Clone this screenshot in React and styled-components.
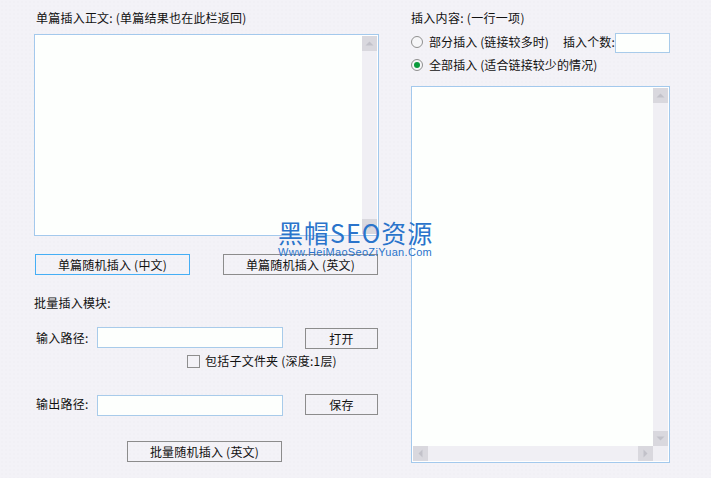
import React from "react";
import styled, { createGlobalStyle } from "styled-components";

const GlobalStyle = createGlobalStyle`
  html, body {
    margin: 0;
    padding: 0;
    background: #f3f2f7;
  }
  * {
    box-sizing: border-box;
  }
`;

const Page = styled.div`
  position: relative;
  display: grid;
  grid-template-columns: 345px 259px;
  column-gap: 32px;
  width: 711px;
  height: 478px;
  padding: 0 0 0 34px;
  overflow: hidden;
  color: #111;
  font-family: "Noto Sans CJK SC", "Liberation Sans", sans-serif;
  font-size: 12px;
  line-height: 16px;
  background-color: #f3f2f7;
  background-image: radial-gradient(#f1f0f5 1px, transparent 1px);
  background-size: 4px 4px;
`;

const Column = styled.div`
  display: flex;
  flex-direction: column;
`;

const Text = styled.span`
  white-space: nowrap;
  letter-spacing: ${(p) => p.$spacing ?? 0.22}px;
`;

const Heading = styled(Text)`
  display: block;
  margin: ${(p) => p.$margin || "10px 0 8px 2px"};
`;

const ScrollBox = styled.div`
  display: grid;
  grid-template-columns: 1fr 15px;
  grid-template-rows: ${(p) => (p.$horizontal ? "1fr 15px" : "1fr")};
  height: ${(p) => p.$height}px;
  margin-top: ${(p) => p.$top || 0}px;
  border: 1px solid #a3c9ec;
  padding: 1px;
  background: #fff;
`;

const Editor = styled.div`
  background: #fdfffd;
`;

const VTrack = styled.div`
  display: flex;
  flex-direction: column;
  justify-content: space-between;
  background: #f0eff4;
`;

const HTrack = styled.div`
  display: flex;
  justify-content: space-between;
  background: #f0eff4;
`;

const Corner = styled.div`
  background: #f0eff4;
`;

const Arrow = styled.div`
  display: flex;
  align-items: center;
  justify-content: center;
  width: 15px;
  height: 15px;
  background: #d9d8de;
  color: #c2c1c9;
`;

const Tri = ({ d }) => (
  <Arrow>
    <svg width="9" height="9" viewBox="0 0 9 9">
      <path d={d} fill="currentColor" />
    </svg>
  </Arrow>
);

const Actions = styled.div`
  display: flex;
  justify-content: space-between;
  margin: 18px 0 0 1px;
  padding-right: 1px;
`;

const Button = styled.div`
  display: flex;
  align-items: center;
  justify-content: center;
  width: ${(p) => p.$width || 155}px;
  height: 21px;
  border: 1px solid ${(p) => (p.$active ? "#45aef5" : "#8c8c8c")};
  white-space: nowrap;
  letter-spacing: 0.22px;
`;

const PathRow = styled.div`
  display: flex;
  align-items: flex-start;
  margin-top: ${(p) => p.$top}px;
  height: 22px;
  padding-left: 2px;
`;

const PathLabel = styled(Text)`
  width: 61px;
  margin-top: ${(p) => p.$top}px;
`;

const Field = styled.div`
  width: ${(p) => p.$width}px;
  height: ${(p) => p.$height || 21}px;
  margin: ${(p) => p.$margin || 0};
  border: 1px solid #a8cbea;
  background: #fdfffd;
`;

const PathButton = styled(Button)`
  margin: ${(p) => p.$top}px 0 0 22px;
`;

const CheckRow = styled.div`
  display: flex;
  align-items: center;
  gap: 5px;
  margin: 4px 0 0 153px;
`;

const CheckBox = styled.div`
  width: 13px;
  height: 13px;
  border: 1px solid #8e8e8e;
  background: #f3f2f7;
`;

const BottomButton = styled(Button)`
  margin: 24px 0 0 93px;
`;

const OptionRow = styled.div`
  display: flex;
  align-items: center;
  height: ${(p) => p.$height}px;
`;

const Radio = styled.div`
  display: flex;
  align-items: center;
  justify-content: center;
  width: 12px;
  height: 12px;
  margin-right: 6px;
  border: 1px solid #8f8f8f;
  border-radius: 50%;
  background: #f6f6f8;

  &::after {
    content: "";
    display: ${(p) => (p.$checked ? "block" : "none")};
    width: 6px;
    height: 6px;
    border-radius: 50%;
    background: #0b9a3c;
  }
`;

const CountLabel = styled(Text)`
  margin-left: 14px;
`;

const Watermark = styled.div`
  position: absolute;
  left: 278px;
  top: 217px;
  color: #2a74cb;
  white-space: nowrap;
`;

const WatermarkTitle = styled.div`
  font-size: 25px;
  line-height: 30px;
  letter-spacing: 1px;
`;

const WatermarkUrl = styled.div`
  margin-top: -1px;
  font-family: "Liberation Sans", sans-serif;
  font-size: 11px;
  line-height: 12px;
  letter-spacing: 0.32px;
`;

const UP = "M4.5 2.5 L8.5 6.5 L0.5 6.5 Z";
const DOWN = "M0.5 2.5 L8.5 2.5 L4.5 6.5 Z";
const LEFT = "M2.5 4.5 L6.5 0.5 L6.5 8.5 Z";
const RIGHT = "M6.5 4.5 L2.5 0.5 L2.5 8.5 Z";

export default function App() {
  return (
    <>
      <GlobalStyle />
      <Page>
        <Column>
          <Heading>单篇插入正文: (单篇结果也在此栏返回)</Heading>
          <ScrollBox $height={202}>
            <Editor />
            <VTrack>
              <Tri d={UP} />
              <Tri d={DOWN} />
            </VTrack>
          </ScrollBox>
          <Actions>
            <Button $active>单篇随机插入 (中文)</Button>
            <Button>单篇随机插入 (英文)</Button>
          </Actions>
          <Heading $margin="20px 0 0 0">批量插入模块:</Heading>
          <PathRow $top={16}>
            <PathLabel $top={3}>输入路径:</PathLabel>
            <Field $width={186} />
            <PathButton $width={73} $top={1}>打开</PathButton>
          </PathRow>
          <CheckRow>
            <CheckBox />
            <Text>包括子文件夹 (深度:1层)</Text>
          </CheckRow>
          <PathRow $top={26}>
            <PathLabel $top={1}>输出路径:</PathLabel>
            <Field $width={186} />
            <PathButton $width={73} $top={-1}>保存</PathButton>
          </PathRow>
          <BottomButton>批量随机插入 (英文)</BottomButton>
        </Column>
        <Column>
          <Heading $margin="10px 0 6px 0" $spacing={0.3}>插入内容: (一行一项)</Heading>
          <OptionRow $height={20}>
            <Radio />
            <Text $spacing={0.1}>部分插入 (链接较多时)</Text>
            <CountLabel $spacing={0.1}>插入个数:</CountLabel>
            <Field $width={55} $height={20} $margin="2px 0 0 auto" />
          </OptionRow>
          <OptionRow $height={26}>
            <Radio $checked />
            <Text $spacing={0.1}>全部插入 (适合链接较少的情况)</Text>
          </OptionRow>
          <ScrollBox $height={377} $horizontal $top={8}>
            <Editor />
            <VTrack>
              <Tri d={UP} />
              <Tri d={DOWN} />
            </VTrack>
            <HTrack>
              <Tri d={LEFT} />
              <Tri d={RIGHT} />
            </HTrack>
            <Corner />
          </ScrollBox>
        </Column>
        <Watermark>
          <WatermarkTitle>黑帽SEO资源</WatermarkTitle>
          <WatermarkUrl>Www.HeiMaoSeoZiYuan.Com</WatermarkUrl>
        </Watermark>
      </Page>
    </>
  );
}
